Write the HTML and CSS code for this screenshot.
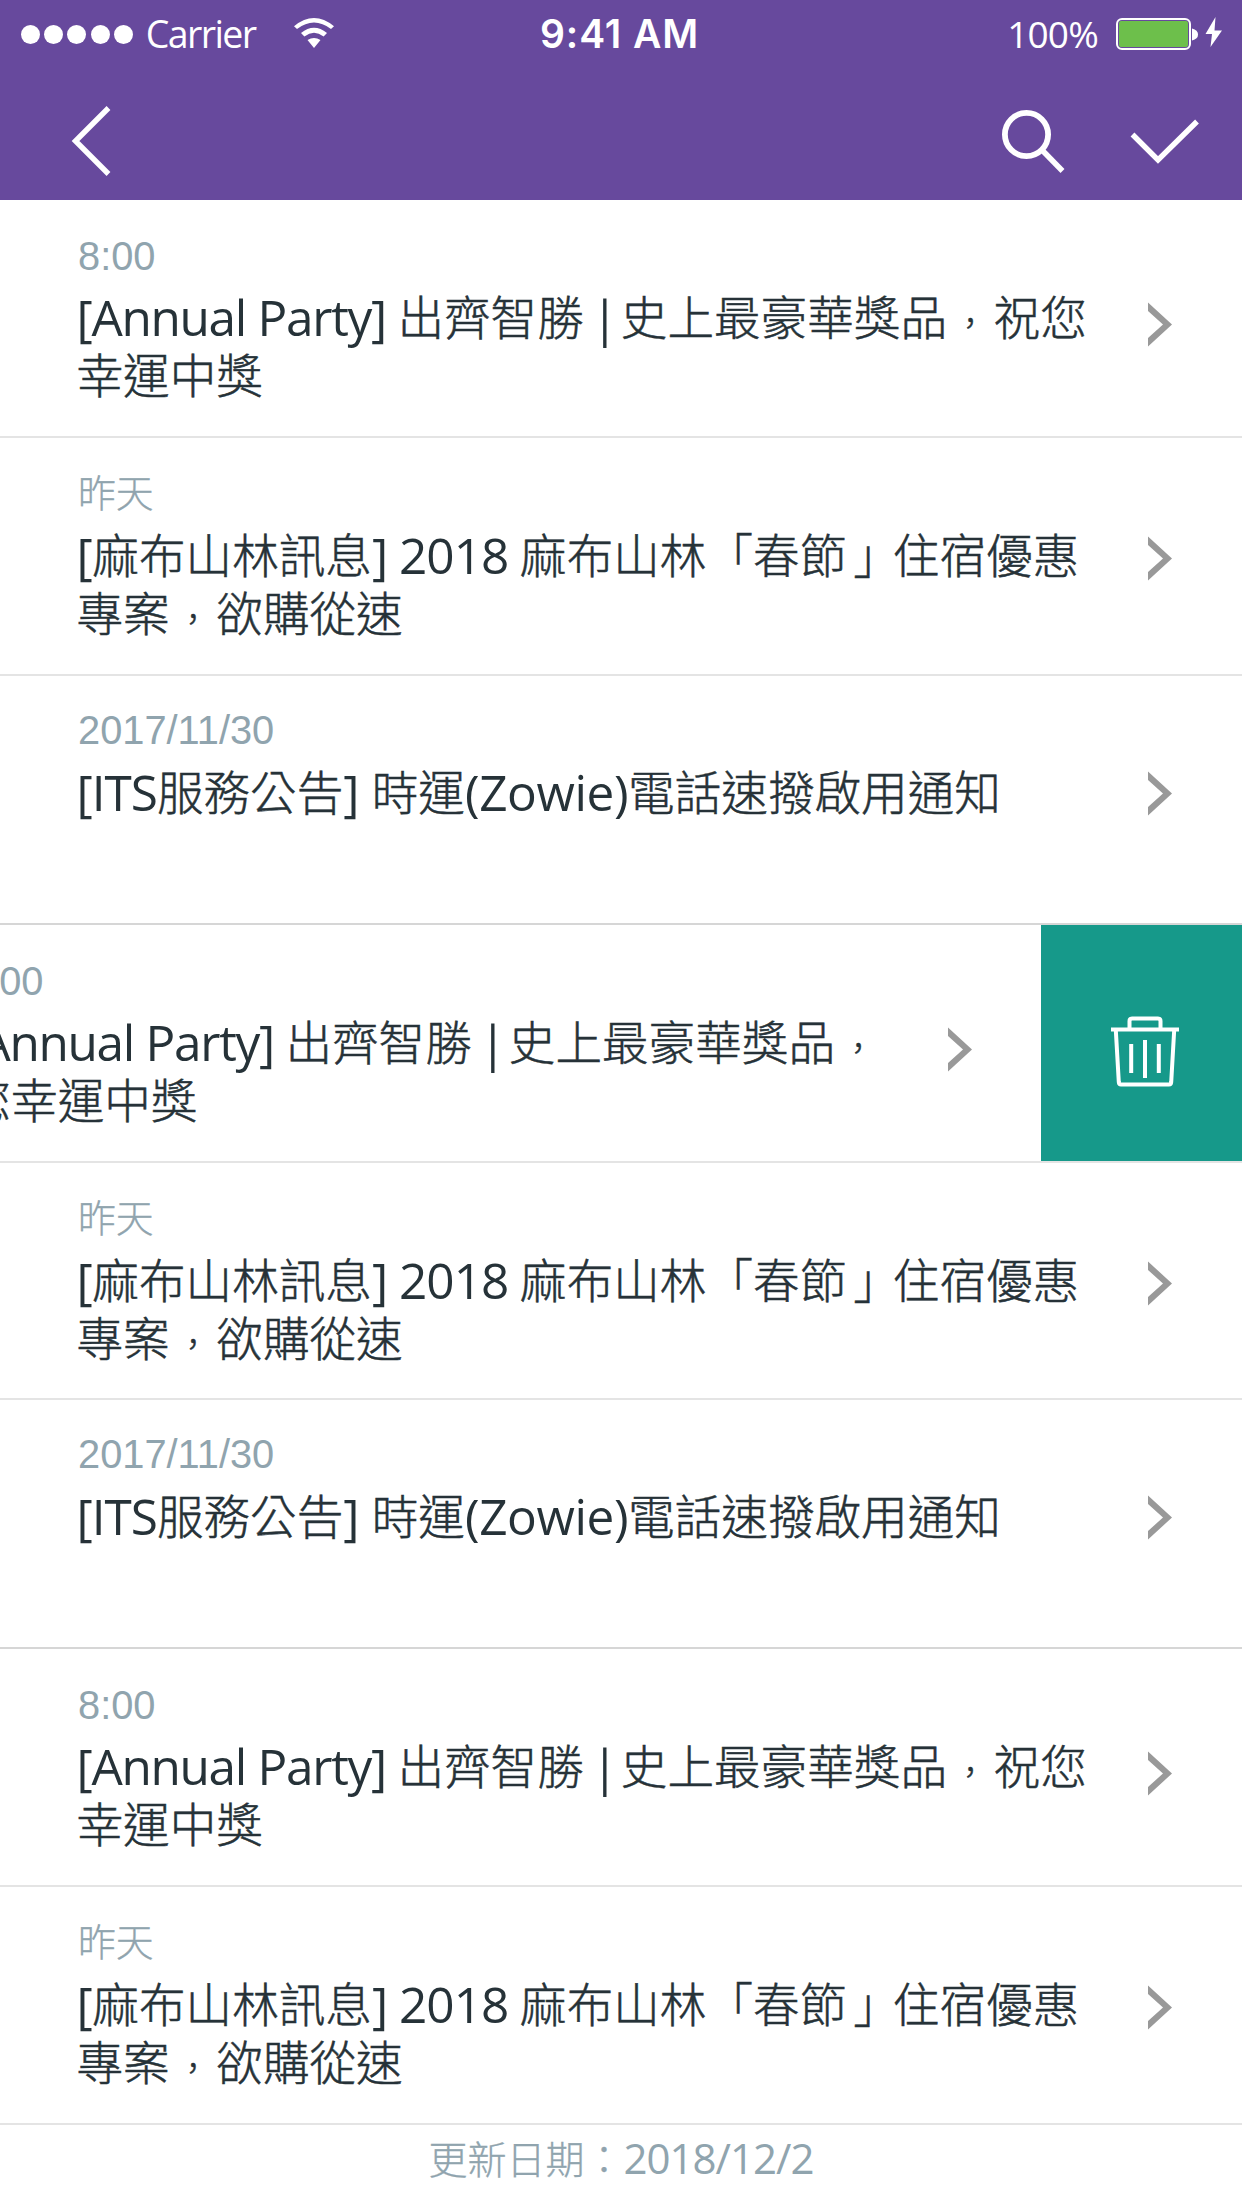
FILE: index.html
```html
<!DOCTYPE html>
<html lang="zh-Hant">
<head>
<meta charset="utf-8">
<title>訊息</title>
<link rel="stylesheet" href="styles.css">
</head>
<body>
<svg class="defs" width="0" height="0"><symbol id="chev" viewBox="0 0 24 45"><path d="M0 0.5L24 22.5L0 44.5V36L15 22.5L0 9Z" fill="#999"/></symbol></svg>
<header class="top">
  <div class="status">
    <div class="status-left">
      <span class="dots"><i></i><i></i><i></i><i></i><i></i></span>
      <span class="carrier">Carrier</span>
      <svg class="wifi" width="40" height="30" viewBox="0 0 40 30"><path d="M0 8.2Q20-8.2 40 8.2L37 11Q20-2 3 11ZM7 15Q20 4.500 33 15L29.600 18.400Q20 11 10.400 18.400ZM13.500 22Q20 18 26.500 22L20 30Z" fill="#fff"/></svg>
    </div>
    <div class="clock">9:41 AM</div>
    <div class="status-right">
      <span class="percent">100%</span>
      <svg class="battery" width="108" height="34" viewBox="0 0 108 34"><rect x="1" y="2" width="73" height="30" rx="5" fill="none" stroke="#fff" stroke-width="2"/><rect x="3" y="4" width="69" height="26" rx="2" fill="#6dbf4b"/><path d="M76 11.500Q82 13 82 17.500T76 23.500Z" fill="#fff"/><path d="M99.500 0L89.500 17H96L94.500 30L106 13.500H98.500Z" fill="#fff"/></svg>
    </div>
  </div>
  <nav class="nav">
    <svg width="42" height="72" viewBox="0 0 42 72"><path d="M38.500 3L5.500 36L38.500 69" fill="none" stroke="#fff" stroke-width="5.400"/></svg>
    <div class="actions">
      <svg width="66" height="66" viewBox="0 0 66 66"><g fill="none" stroke="#fff"><circle cx="25.500" cy="25.500" r="21.600" stroke-width="5.800"/><path d="M41 41L61.500 62" stroke-width="5.500"/></g></svg>
      <svg class="check" width="70" height="46" viewBox="0 0 70 46"><path d="M2.500 15.500L28 41L67 2.500" fill="none" stroke="#fff" stroke-width="5.400"/></svg>
    </div>
  </nav>
</header>
<main class="list">
  <article class="row party">
    <div class="text">
      <p class="date">8:00</p>
      <p class="title"><span class="annual">[Annual Party] </span><span class="han">出齊智勝</span><span class="bar"> | </span><span class="han">史上最豪華獎品<span class="comma">，</span>祝您<br>幸運中獎</span></p>
    </div>
    <svg class="chev"><use href="#chev"/></svg>
  </article>
  <article class="row spring">
    <div class="text">
      <p class="date"><span class="day">昨天</span></p>
      <p class="title">[<span class="han">麻布山林訊息</span><span class="year">] 2018 </span><span class="han">麻布山林「春節<span class="close">」</span>住宿優惠<br>專案<span class="comma">，</span>欲購從速</span></p>
    </div>
    <svg class="chev"><use href="#chev"/></svg>
  </article>
  <article class="row notice">
    <div class="text">
      <p class="date">2017/11/30</p>
      <p class="title"><span class="its">[ITS</span><span class="han">服務公告</span>] <span class="han">時運</span><span class="zowie">(Zowie)</span><span class="han">電話速撥啟用通知</span></p>
    </div>
    <svg class="chev"><use href="#chev"/></svg>
  </article>
  <article class="row party swiped">
    <div class="text">
      <p class="date">8:00</p>
      <p class="title"><span class="annual">[Annual Party] </span><span class="han">出齊智勝</span><span class="bar"> | </span><span class="han">史上最豪華獎品<span class="comma">，</span><br>您幸運中獎</span></p>
    </div>
    <svg class="chev"><use href="#chev"/></svg>
    <button class="delete" aria-label="刪除"><svg width="68" height="71" viewBox="0 0 68 71"><g fill="none" stroke="#fff" stroke-width="4"><path d="M0 13.500H68M18.500 13V5Q18.500 2.500 21 2.500H47Q49.500 2.500 49.500 5V13M4.800 14L7.800 66Q8 68.500 10 68.500H58Q60 68.500 60.200 66L63.200 14M34 24V62M20.200 28V57M47.800 28V57"/></g></svg></button>
  </article>
  <article class="row spring">
    <div class="text">
      <p class="date"><span class="day">昨天</span></p>
      <p class="title">[<span class="han">麻布山林訊息</span><span class="year">] 2018 </span><span class="han">麻布山林「春節<span class="close">」</span>住宿優惠<br>專案<span class="comma">，</span>欲購從速</span></p>
    </div>
    <svg class="chev"><use href="#chev"/></svg>
  </article>
  <article class="row notice">
    <div class="text">
      <p class="date">2017/11/30</p>
      <p class="title"><span class="its">[ITS</span><span class="han">服務公告</span>] <span class="han">時運</span><span class="zowie">(Zowie)</span><span class="han">電話速撥啟用通知</span></p>
    </div>
    <svg class="chev"><use href="#chev"/></svg>
  </article>
  <article class="row party">
    <div class="text">
      <p class="date">8:00</p>
      <p class="title"><span class="annual">[Annual Party] </span><span class="han">出齊智勝</span><span class="bar"> | </span><span class="han">史上最豪華獎品<span class="comma">，</span>祝您<br>幸運中獎</span></p>
    </div>
    <svg class="chev"><use href="#chev"/></svg>
  </article>
  <article class="row spring">
    <div class="text">
      <p class="date"><span class="day">昨天</span></p>
      <p class="title">[<span class="han">麻布山林訊息</span><span class="year">] 2018 </span><span class="han">麻布山林「春節<span class="close">」</span>住宿優惠<br>專案<span class="comma">，</span>欲購從速</span></p>
    </div>
    <svg class="chev"><use href="#chev"/></svg>
  </article>
</main>
<footer class="updated"><span class="label">更新日期：</span>2018/12/2</footer>
</body>
</html>
```
FILE: styles.css
```css
* { box-sizing: border-box; }
body { margin: 0; width: 1242px; height: 2208px; overflow: hidden; background: #fff; color: #263238; font-family: "Open Sans", "Noto Sans CJK TC", sans-serif; }
p { margin: 0; }
svg { display: block; flex: none; }
.defs { position: absolute; }

.top { height: 200px; background: #67499d; color: #fff; }
.status { height: 68px; display: grid; grid-template-columns: 1fr auto 1fr; align-items: center; padding: 0 18px 0 21px; line-height: 68px; }
.status-left, .status-right { display: flex; align-items: center; }
.status-right { justify-content: flex-end; gap: 18px; }
.dots { display: flex; gap: 4.200px; }
.dots i { width: 19px; height: 19px; border-radius: 50%; background: #fff; }
.carrier { width: 112px; margin-left: 13px; font-size: 37.500px; letter-spacing: -1.600px; white-space: nowrap; }
.wifi { margin-left: 36px; margin-top: -2px; }
.clock { margin-right: 6px; font: 600 39px/66px Inter, sans-serif; letter-spacing: .9px; }
.percent { font-size: 37px; letter-spacing: -.8px; }
.battery { margin-top: -1px; }
.nav { height: 132px; display: flex; align-items: flex-start; justify-content: space-between; padding: 37px 42px 0 69.500px; }
.actions { display: flex; align-items: flex-start; gap: 63px; padding-top: 4px; }
.check { margin-top: 10px; }

.row { display: flex; align-items: flex-start; padding: 33px 70px 0 76.500px; border-bottom: 2px solid #e4e4e4; }
.party { height: 238px; }
.spring { height: 237.500px; }
.notice { height: 249px; padding-top: 31px; border-color: #d6d6d6; }
.text { flex: 1; white-space: nowrap; }
.date { padding-left: 1.500px; font: 39.800px/46px "Liberation Sans", Arial, sans-serif; color: #90a4ae; }
.day { font: 300 37.800px/0 "Noto Sans CJK TC", sans-serif; vertical-align: 1px; -webkit-text-stroke: .3px; }
.title { margin-top: 9px; font-size: 49.500px; line-height: 58px; font-stretch: 93%; letter-spacing: -.3px; }
.notice .title { margin-top: 10px; }
.annual { letter-spacing: -1.300px; }
.bar { letter-spacing: -5.300px; }
.year { letter-spacing: -1px; }
.its { letter-spacing: -1px; }
.zowie { letter-spacing: -.4px; }
.han { font: 300 46.600px/0 "Noto Sans CJK TC", sans-serif; letter-spacing: 0; vertical-align: 1px; -webkit-text-stroke: .5px; }
.comma { padding: 0 7.300px; font-size: 32px; }
.close { margin: 0 -7px 0 7px; }
.chev { width: 24px; height: 45px; margin-top: 69px; }
.spring .chev { margin-top: 65px; }
.notice .chev { margin-top: 64px; }

.swiped { padding: 0; overflow: hidden; }
.swiped .text { margin-left: -35.500px; padding-top: 33px; }
.swiped .chev { margin-top: 102px; }
.delete { width: 201px; height: 238px; margin-left: 69px; padding: 15px 0 0 7px; border: 0; background: #16998a; display: flex; align-items: center; justify-content: center; flex: none; }

.updated { padding-top: 4px; text-align: center; font-size: 42px; line-height: 58px; color: #90a4ae; font-stretch: 95%; letter-spacing: -1px; }
.label { font: 300 39px/0 "Noto Sans CJK TC", sans-serif; letter-spacing: 0; -webkit-text-stroke: .3px; }
```
